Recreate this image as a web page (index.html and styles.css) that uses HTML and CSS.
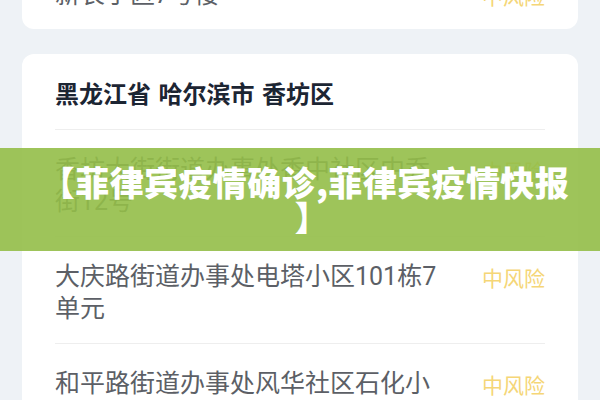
FILE: index.html
```html
<!DOCTYPE html>
<html lang="zh-CN">
<head>
<meta charset="utf-8">
<title>风险地区</title>
<link rel="stylesheet" href="styles.css">
</head>
<body>
<main class="page">
  <section class="card card-prev">
    <div class="row">
      <div class="addr">新长子区7号楼</div>
      <div class="level">中风险</div>
    </div>
  </section>

  <section class="card">
    <h2 class="region">黑龙江省 哈尔滨市 香坊区</h2>
    <div class="row">
      <div class="addr">香坊大街街道办事处香中社区中乔街12号</div>
      <div class="level">中风险</div>
    </div>
    <div class="row">
      <div class="addr">大庆路街道办事处电塔小区101栋7单元</div>
      <div class="level">中风险</div>
    </div>
    <div class="row">
      <div class="addr">和平路街道办事处风华社区石化小区3号楼</div>
      <div class="level">中风险</div>
    </div>
  </section>
</main>

<div class="banner">【菲律宾疫情确诊,菲律宾疫情快报<br><span class="close">】</span></div>
</body>
</html>
```

FILE: styles.css
```css
* {
  box-sizing: border-box;
}

html,
body {
  margin: 0;
  height: 100%;
  overflow: hidden;
}

body {
  position: relative;
  background: #eef2f6;
  font-family: Roboto, "Noto Sans CJK SC", sans-serif;
}

.page {
  display: flex;
  flex-direction: column;
  gap: 25px;
  padding: 0 22px;
}

.card {
  background: #ffffff;
  border-radius: 12px;
  padding: 0 33px;
}

/* previous card, scrolled mostly out of view */
.card-prev {
  margin-top: -45px;
}

.region {
  margin: 0;
  padding: 23px 0 20px;
  font-family: "Noto Sans CJK SC", sans-serif;
  font-size: 24px;
  line-height: 32px;
  font-weight: 700;
  color: #1c2533;
  word-spacing: 2px;
  border-bottom: 1px solid #eeeeee;
}

.row {
  display: flex;
  align-items: flex-start;
  gap: 36px;
  padding: 24px 0 18px;
  border-bottom: 1px solid #eeeeee;
}

.row:last-child {
  border-bottom: none;
}

.addr {
  flex: 1;
  font-size: 25px;
  line-height: 32px;
  color: #5c5f66;
}

.level {
  flex: none;
  font-family: "Noto Sans CJK SC", sans-serif;
  font-size: 21px;
  line-height: 32px;
  color: #f5d677;
}

.banner {
  position: absolute;
  top: 148px;
  left: 0;
  right: 0;
  height: 103px;
  padding: 16px 0 0 10px;
  background: rgba(148, 190, 72, 0.9);
  color: #ffffff;
  font-family: "Noto Sans CJK SC", sans-serif;
  font-size: 34px;
  line-height: 35px;
  font-weight: 900;
  letter-spacing: 0.4px;
  text-align: center;
  white-space: nowrap;
}

.close {
  padding-left: 14px;
}
```
